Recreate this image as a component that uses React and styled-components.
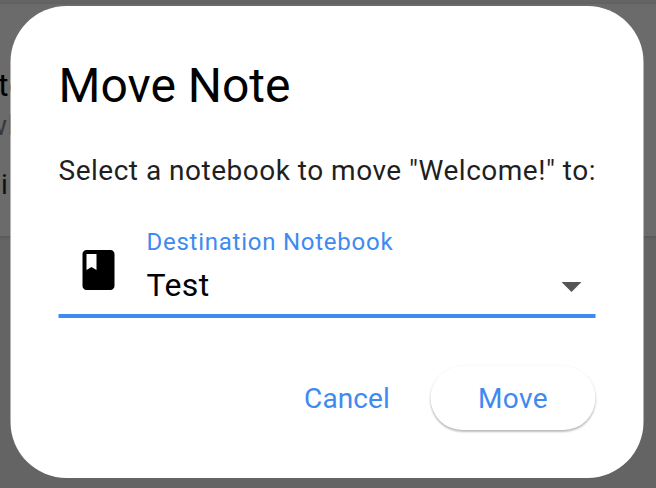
import React from "react";
import styled, { createGlobalStyle } from "styled-components";

const GlobalStyle = createGlobalStyle`
  * { box-sizing: border-box; }
  html, body { margin: 0; overflow: hidden; }
  body { font-family: Roboto, sans-serif; background: #646464; }
`;

const Screen = styled.div`
  position: relative;
  width: 656px;
  height: 488px;
  overflow: hidden;
  background: #646464;
  padding-top: 4px;
`;

const NoteCard = styled.section`
  height: 232px;
  background: #6b6b6b;
  box-shadow: 0 1px 3px rgba(0, 0, 0, 0.18);
  padding-top: 63px;
`;

const NoteLine = styled.div`
  width: 20px;
  height: ${(p) => p.$height}px;
  margin-left: ${(p) => p.$offset}px;
  line-height: 36px;
  white-space: nowrap;
  font-size: ${(p) => p.$size}px;
  font-weight: 400;
  letter-spacing: ${(p) => p.$spacing || 0.5}px;
  color: ${(p) => p.$color};
`;

const Overlay = styled.div`
  position: absolute;
  inset: 0;
  padding: 6px 12px 10px 11px;
`;

const Dialog = styled.div`
  height: 472px;
  border-radius: 56px;
  background: #fff;
  padding: 48px 48px;
  display: flex;
  flex-direction: column;
  transform: translateX(-0.5px);
`;

const Title = styled.h1`
  margin: 0;
  font-size: 48px;
  line-height: 64px;
  font-weight: 400;
  letter-spacing: 0;
  color: #000;
`;

const Message = styled.p`
  margin: 33px 0 0;
  font-size: 28px;
  line-height: 40px;
  letter-spacing: 0.5px;
  white-space: nowrap;
  color: #1f1f1f;
`;

const SelectField = styled.div`
  margin-top: 27px;
  height: 100px;
  border-bottom: 4px solid #3e8af0;
  display: flex;
  align-items: flex-start;
`;

const LeadingIcon = styled.svg`
  width: 48px;
  height: 48px;
  margin: 28px 24px 0 16px;
  fill: #000;
`;

const FieldText = styled.div`
  flex: 1;
  padding-top: 8px;
`;

const FieldLabel = styled.div`
  font-size: 24px;
  line-height: 32px;
  letter-spacing: 0.75px;
  color: #3e8af0;
`;

const FieldValue = styled.div`
  margin-top: 3px;
  font-size: 32px;
  line-height: 48px;
  letter-spacing: 0.4px;
  color: #000;
`;

const Caret = styled.svg`
  width: 20px;
  height: 10px;
  margin: 64px 14px 0 0;
  fill: #555;
`;

const Actions = styled.div`
  margin-top: auto;
  display: flex;
  justify-content: flex-end;
  gap: 16px;
`;

const Button = styled.button`
  height: 64px;
  width: ${(p) => p.$width}px;
  padding: 2px 0 0;
  border: 0;
  border-radius: 32px;
  background: #fff;
  box-shadow: ${(p) =>
    p.$raised
      ? "0 2px 2px rgba(0,0,0,.2), 0 1px 3px rgba(0,0,0,.12)"
      : "none"};
  font: 400 28px/62px Roboto, sans-serif;
  letter-spacing: ${(p) => p.$spacing}px;
  color: #3e8af0;
`;

export default function App() {
  return (
    <>
      <GlobalStyle />
      <Screen>
        <NoteCard>
          <NoteLine $height={41} $size={32} $offset={-2} $color="#000">to</NoteLine>
          <NoteLine $height={59} $size={28} $offset={-14} $spacing={1} $color="#393939">wh</NoteLine>
          <NoteLine $height={36} $size={28} $offset={1} $color="#111">i</NoteLine>
        </NoteCard>
        <Overlay>
          <Dialog role="dialog" aria-label="Move Note">
            <Title>Move Note</Title>
            <Message>Select a notebook to move "Welcome!" to:</Message>
            <SelectField>
              <LeadingIcon viewBox="0 0 24 24">
                <path d="M18 2H6c-1.1 0-2 .9-2 2v16c0 1.1.9 2 2 2h12c1.1 0 2-.9 2-2V4c0-1.1-.9-2-2-2zM6 4h5v8l-2.500-1.500L6 12V4z" />
              </LeadingIcon>
              <FieldText>
                <FieldLabel>Destination Notebook</FieldLabel>
                <FieldValue>Test</FieldValue>
              </FieldText>
              <Caret viewBox="0 0 20 10">
                <path d="M0 0h20L10 10z" />
              </Caret>
            </SelectField>
            <Actions>
              <Button $width={135} $spacing={0.1}>Cancel</Button>
              <Button $width={165} $spacing={0.4} $raised>Move</Button>
            </Actions>
          </Dialog>
        </Overlay>
      </Screen>
    </>
  );
}
